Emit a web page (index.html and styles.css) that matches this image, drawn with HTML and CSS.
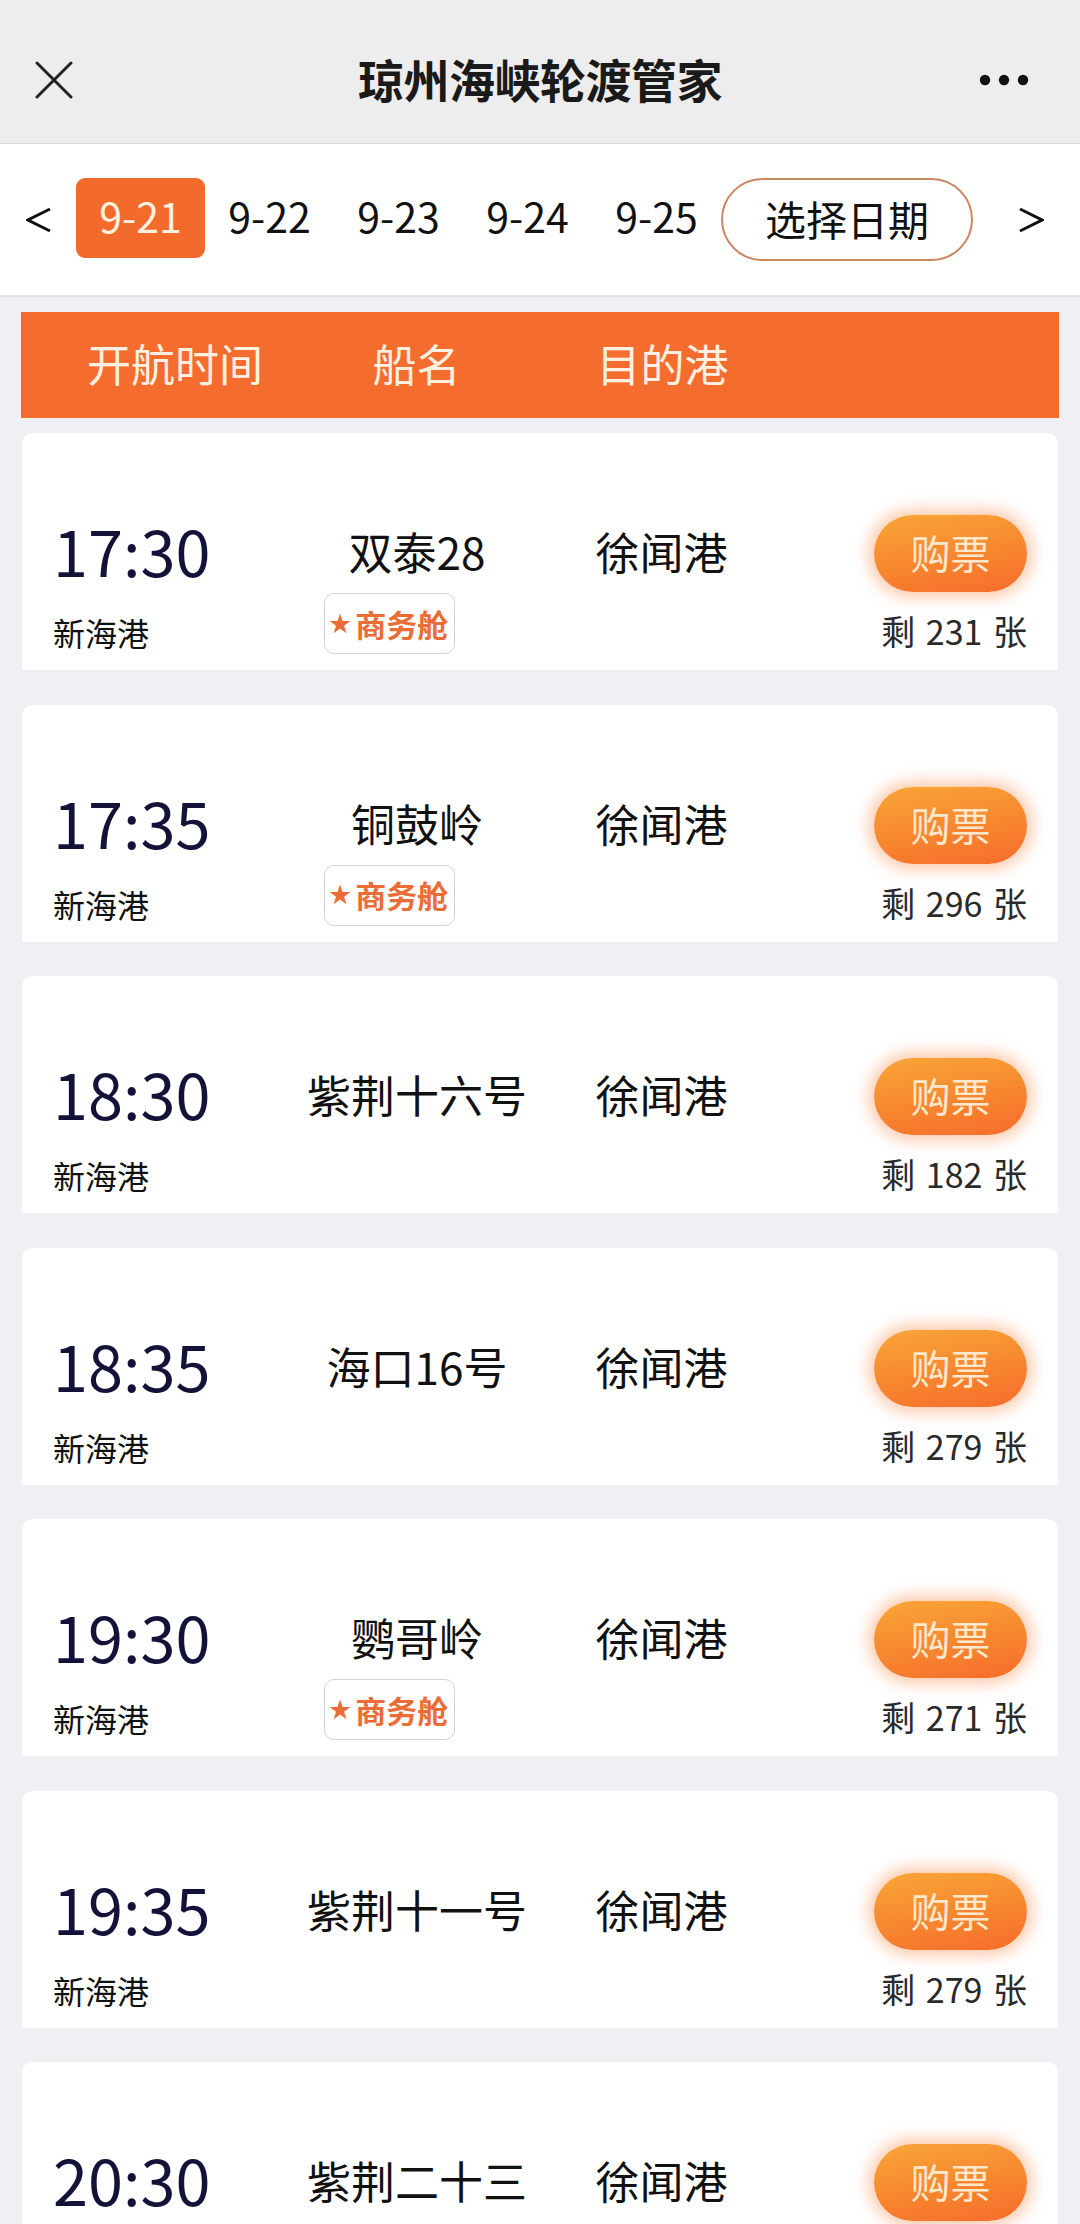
FILE: index.html
```html
<!DOCTYPE html>
<html lang="zh-CN">
<head>
<meta charset="utf-8">
<title>琼州海峡轮渡管家</title>
<link rel="stylesheet" href="styles.css">
</head>
<body>
<div class="page">
  <header class="nav">
    <div class="nav-left">
      <svg class="icon-close" width="38" height="38" viewBox="0 0 38 38"><path d="M2 2 L36 36 M36 2 L2 36" stroke="#222" stroke-width="3" stroke-linecap="round"/></svg>
    </div>
    <h1 class="nav-title">琼州海峡轮渡管家</h1>
    <div class="nav-right">
      <svg class="icon-more" width="50" height="12" viewBox="0 0 50 12"><circle cx="6" cy="6" r="5.2" fill="#111"/><circle cx="25" cy="6" r="5.2" fill="#111"/><circle cx="44" cy="6" r="5.2" fill="#111"/></svg>
    </div>
  </header>

  <nav class="datebar">
    <span class="arrow arrow-left"><svg width="26" height="26" viewBox="0 0 26 26"><polyline points="24,2 2,13 24,24" fill="none" stroke="#111" stroke-width="3"/></svg></span>
    <span class="date date-active">9-21</span>
    <span class="date">9-22</span>
    <span class="date">9-23</span>
    <span class="date">9-24</span>
    <span class="date">9-25</span>
    <span class="pick">选择日期</span>
    <span class="arrow arrow-right"><svg width="26" height="26" viewBox="0 0 26 26"><polyline points="2,2 24,13 2,24" fill="none" stroke="#111" stroke-width="3"/></svg></span>
  </nav>

  <div class="thead">
    <span>开航时间</span>
    <span>船名</span>
    <span>目的港</span>
  </div>

  <main class="list">
    <section class="card">
      <div class="time">17:30</div>
      <div class="ship">双泰28</div>
      <div class="dest">徐闻港</div>
      <div class="buy">购票</div>
      <div class="port">新海港</div>
      <div class="badge"><span class="star">★</span>商务舱</div>
      <div class="left">剩 231 张</div>
    </section>
    <section class="card">
      <div class="time">17:35</div>
      <div class="ship">铜鼓岭</div>
      <div class="dest">徐闻港</div>
      <div class="buy">购票</div>
      <div class="port">新海港</div>
      <div class="badge"><span class="star">★</span>商务舱</div>
      <div class="left">剩 296 张</div>
    </section>
    <section class="card">
      <div class="time">18:30</div>
      <div class="ship">紫荆十六号</div>
      <div class="dest">徐闻港</div>
      <div class="buy">购票</div>
      <div class="port">新海港</div>
      <div class="left">剩 182 张</div>
    </section>
    <section class="card">
      <div class="time">18:35</div>
      <div class="ship">海口16号</div>
      <div class="dest">徐闻港</div>
      <div class="buy">购票</div>
      <div class="port">新海港</div>
      <div class="left">剩 279 张</div>
    </section>
    <section class="card">
      <div class="time">19:30</div>
      <div class="ship">鹦哥岭</div>
      <div class="dest">徐闻港</div>
      <div class="buy">购票</div>
      <div class="port">新海港</div>
      <div class="badge"><span class="star">★</span>商务舱</div>
      <div class="left">剩 271 张</div>
    </section>
    <section class="card">
      <div class="time">19:35</div>
      <div class="ship">紫荆十一号</div>
      <div class="dest">徐闻港</div>
      <div class="buy">购票</div>
      <div class="port">新海港</div>
      <div class="left">剩 279 张</div>
    </section>
    <section class="card">
      <div class="time">20:30</div>
      <div class="ship">紫荆二十三</div>
      <div class="dest">徐闻港</div>
      <div class="buy">购票</div>
    </section>
  </main>
</div>
</body>
</html>
```

FILE: styles.css
```css
* { box-sizing: border-box; }
html, body {
  margin: 0;
  padding: 0;
}
body {
  width: 1080px;
  height: 2224px;
  overflow: hidden;
  background: #efeff4;
  font-family: "Noto Sans CJK SC", "Noto Sans", sans-serif;
  color: #111;
}
.page { width: 1080px; }

/* nav */
.nav {
  height: 143px;
  background: #ededed;
  display: grid;
  grid-template-columns: 1fr auto 1fr;
  align-items: start;
  padding-top: 58px;
}
.nav-left { padding-left: 35px; padding-top: 3px; height: 44px; }
.icon-close { display: block; }
.nav-title {
  margin: 0;
  font-size: 46px;
  line-height: 40px;
  font-weight: 700;
  color: #1a1a1a;
  letter-spacing: -0.5px;
}
.nav-right {
  display: flex;
  justify-content: flex-end;
  padding-right: 51px;
  padding-top: 16px;
}
.icon-more { display: block; }

/* date bar */
.datebar {
  height: 154px;
  background: #fff;
  border-top: 1px solid #dadada;
  border-bottom: 2px solid #e2e2e2;
  display: flex;
  align-items: center;
}
.arrow { display: flex; align-items: center; }
.arrow svg { display: block; }
.arrow-left { margin-left: 26px; width: 50px; }
.arrow-right { margin-left: 45px; }
.date {
  width: 129px;
  height: 80px;
  border-radius: 9px;
  text-align: center;
  font-size: 41px;
  line-height: 74px;
  color: #111;
  margin-top: -4px;
}
.date-active {
  background: #f26b2d;
  color: #fff1e0;
}
.pick {
  width: 252px;
  height: 83px;
  border: 2px solid #c98660;
  border-radius: 42px;
  text-align: center;
  font-size: 41px;
  line-height: 76px;
  color: #111;
}

/* table head */
.thead {
  margin: 15px 21px 0 21px;
  height: 106px;
  background: #f46d2f;
  display: grid;
  grid-template-columns: 240px 243px 249px;
  padding-left: 34px;
  color: #fff1e2;
  font-size: 44px;
  line-height: 102px;
  text-align: center;
}

/* list */
.list {
  display: flex;
  flex-direction: column;
  gap: 34.5px;
  margin: 15px 22px 0 22px;
}
.card {
  height: 237px;
  background: #fff;
  border-radius: 10px 10px 0 0;
  display: grid;
  grid-template-columns: 244px 240px 249px 241px;
  grid-template-rows: 77px 78px;
  padding: 82px 31px 0 31px;
  align-items: start;
}
.time {
  grid-column: 1; grid-row: 1;
  font-size: 63px;
  line-height: 70px;
  color: #13133a;
  letter-spacing: 0;
}
.ship {
  grid-column: 2; grid-row: 1;
  font-size: 44px;
  line-height: 72px;
  text-align: center;
  white-space: nowrap;
  color: #111;
}
.dest {
  grid-column: 3; grid-row: 1;
  font-size: 44px;
  line-height: 72px;
  text-align: center;
  color: #111;
}
.buy {
  grid-column: 4; grid-row: 1;
  justify-self: end;
  width: 153px;
  height: 77px;
  border-radius: 39px;
  background: linear-gradient(170deg, #f8a637 0%, #f7862f 55%, #f56c2b 100%);
  box-shadow: 0 0 16px 5px rgba(247, 120, 45, 0.42);
  color: #fde8cc;
  font-size: 40px;
  line-height: 74px;
  text-align: center;
}
.port {
  grid-column: 1; grid-row: 2;
  font-size: 32px;
  line-height: 40px;
  margin-top: 20px;
  color: #111;
}
.badge {
  grid-column: 2; grid-row: 2;
  justify-self: start;
  margin-left: 27px;
  margin-top: 1px;
  width: 131px;
  height: 61px;
  border: 1px solid #d2d2d2;
  border-radius: 10px;
  padding-left: 3px;
  display: flex;
  align-items: center;
  white-space: nowrap;
  font-size: 31px;
  font-weight: 700;
  color: #ea6d36;
  line-height: 40px;
}
.star {
  font-size: 27px;
  margin-right: 3px;
  font-family: "DejaVu Sans", sans-serif;
}
.left {
  grid-column: 4; grid-row: 2;
  justify-self: end;
  font-size: 34px;
  line-height: 40px;
  margin-top: 19px;
  color: #2a2a2a;
  white-space: nowrap;
  word-spacing: 3px;
}
```
